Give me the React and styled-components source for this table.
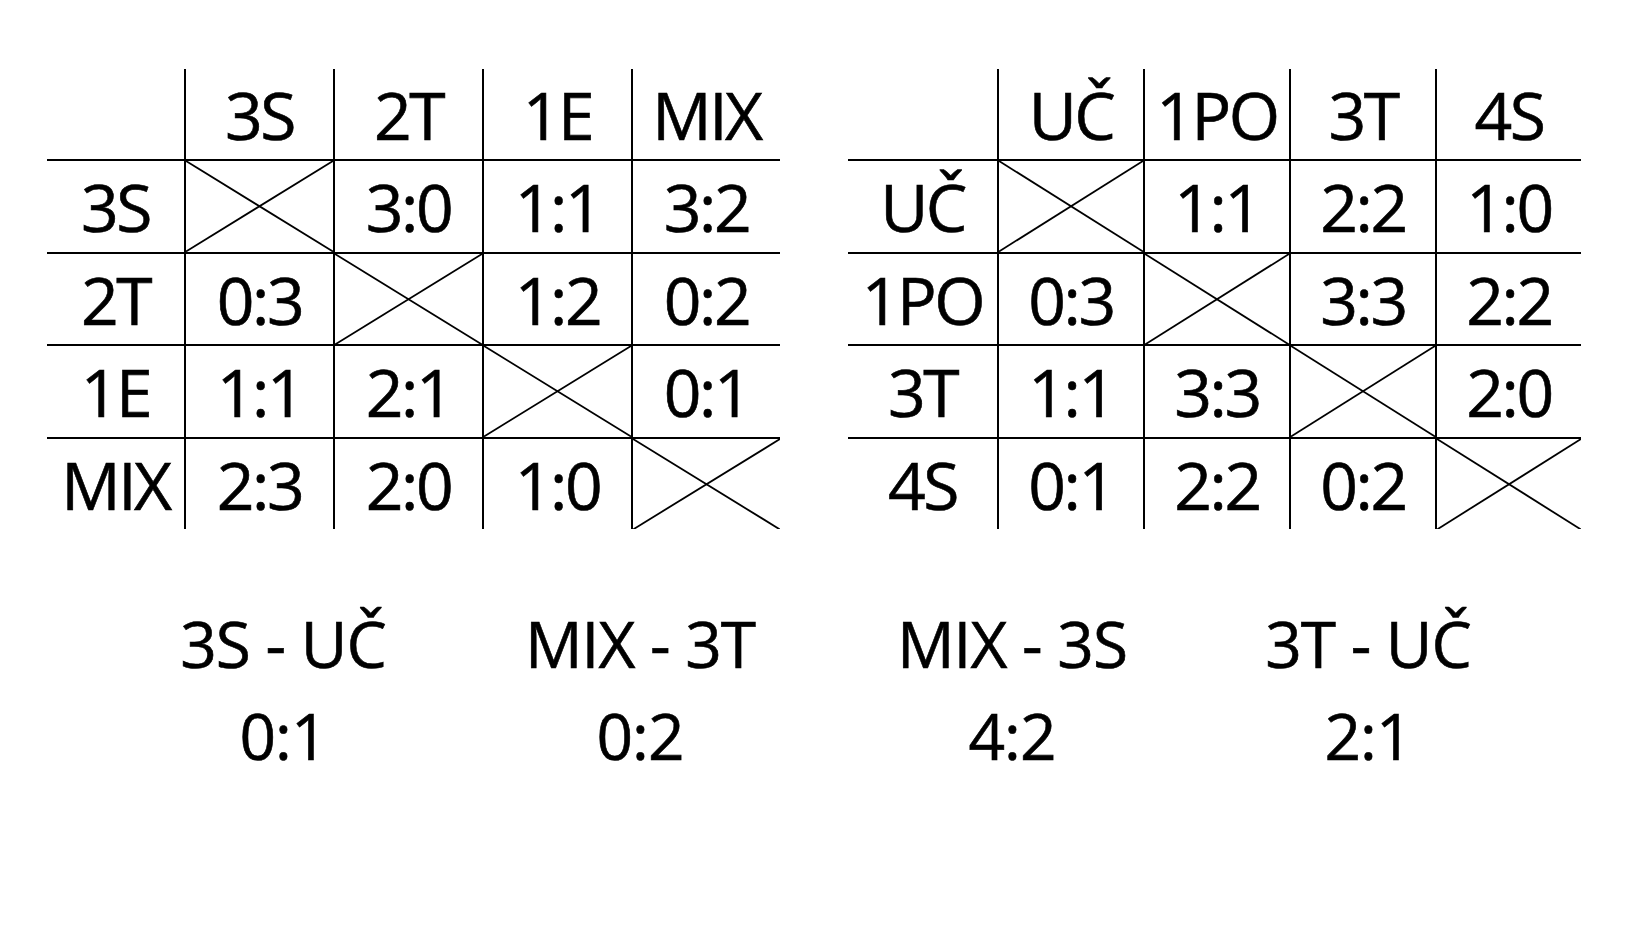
import React from 'react';
import styled, { createGlobalStyle } from 'styled-components';

const GlobalStyle = createGlobalStyle`
  html, body {
    margin: 0;
    padding: 0;
    background: #ffffff;
  }
  body {
    font-family: 'Open Sans', 'Liberation Sans', sans-serif;
    color: #000000;
  }
`;

const Page = styled.div`
  width: 1637px;
  height: 947px;
  padding-top: 69px;
  box-sizing: border-box;
  overflow: hidden;
`;

const Tables = styled.div`
  display: flex;
  gap: 68px;
  padding-left: 47px;
`;

const Grid = styled.div`
  display: grid;
  grid-template-columns: ${(props) => props.$first}px repeat(4, ${(props) => props.$cell}px);
  grid-template-rows: 90px repeat(4, 92.5px);
`;

const Cell = styled.div`
  position: relative;
  display: flex;
  align-items: center;
  justify-content: center;
  box-sizing: border-box;
  border-left: ${(props) => (props.$left ? '2px solid #000' : 'none')};
  border-top: ${(props) => (props.$top ? '2px solid #000' : 'none')};
  font-size: 66px;
  letter-spacing: -2.5px;
  -webkit-text-stroke: 0.6px #000;
  white-space: nowrap;
`;

const Cross = styled.svg`
  position: absolute;
  inset: 0;
  width: 100%;
  height: 100%;
`;

const Results = styled.div`
  display: grid;
  grid-template-columns: 358px 356px 388px 324px;
  padding-left: 104px;
  margin-top: 69px;
`;

const Match = styled.div`
  text-align: center;
  font-size: 64px;
  line-height: 92px;
  letter-spacing: -1px;
  -webkit-text-stroke: 0.6px #000;
  white-space: nowrap;
`;

const CrossMark = () => (
  <Cross viewBox="0 0 100 100" preserveAspectRatio="none">
    <line x1="0" y1="0" x2="100" y2="100" stroke="#000" strokeWidth="1.8" vectorEffect="non-scaling-stroke" />
    <line x1="100" y1="0" x2="0" y2="100" stroke="#000" strokeWidth="1.8" vectorEffect="non-scaling-stroke" />
  </Cross>
);

const ScoreTable = ({ teams, scores, first, cell }) => (
  <Grid $first={first} $cell={cell}>
    <Cell />
    {teams.map((t) => (
      <Cell key={'h' + t} $left>
        {t}
      </Cell>
    ))}
    {teams.map((row, r) => (
      <React.Fragment key={row}>
        <Cell $top>{row}</Cell>
        {teams.map((col, c) => (
          <Cell key={col} $top $left>
            {r === c ? <CrossMark /> : scores[r][c]}
          </Cell>
        ))}
      </React.Fragment>
    ))}
  </Grid>
);

const leftTeams = ['3S', '2T', '1E', 'MIX'];
const leftScores = [
  [null, '3:0', '1:1', '3:2'],
  ['0:3', null, '1:2', '0:2'],
  ['1:1', '2:1', null, '0:1'],
  ['2:3', '2:0', '1:0', null],
];

const rightTeams = ['UČ', '1PO', '3T', '4S'];
const rightScores = [
  [null, '1:1', '2:2', '1:0'],
  ['0:3', null, '3:3', '2:2'],
  ['1:1', '3:3', null, '2:0'],
  ['0:1', '2:2', '0:2', null],
];

const matches = [
  { name: '3S - UČ', score: '0:1' },
  { name: 'MIX - 3T', score: '0:2' },
  { name: 'MIX - 3S', score: '4:2' },
  { name: '3T - UČ', score: '2:1' },
];

const App = () => (
  <Page>
    <GlobalStyle />
    <Tables>
      <ScoreTable teams={leftTeams} scores={leftScores} first={137} cell={149} />
      <ScoreTable teams={rightTeams} scores={rightScores} first={149} cell={146} />
    </Tables>
    <Results>
      {matches.map((m) => (
        <Match key={m.name}>
          {m.name}
          <br />
          {m.score}
        </Match>
      ))}
    </Results>
  </Page>
);

export default App;
